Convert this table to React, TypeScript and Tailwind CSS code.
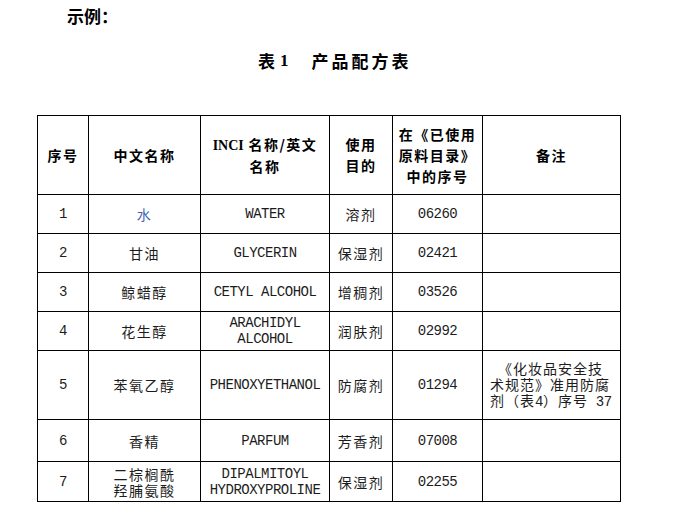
import React from 'react';

type Row = {
  no: string;
  cn: React.ReactNode;
  inci: React.ReactNode;
  use: string;
  code: string;
  note?: React.ReactNode;
  h: string;
  cnClass?: string;
};

const cjk = '[font-family:"Noto_Sans_CJK_SC",sans-serif]';
const mono = '[font-family:"Liberation_Mono",monospace] tracking-[-0.5px]';

const rows: Row[] = [
  { no: '1', cn: '水', inci: 'WATER', use: '溶剂', code: '06260', h: 'h-[39px]', cnClass: 'text-[#3f66b0]' },
  { no: '2', cn: '甘油', inci: 'GLYCERIN', use: '保湿剂', code: '02421', h: 'h-[39px]' },
  { no: '3', cn: '鲸蜡醇', inci: 'CETYL ALCOHOL', use: '增稠剂', code: '03526', h: 'h-[39px]' },
  {
    no: '4',
    cn: '花生醇',
    inci: (
      <>
        ARACHIDYL
        <br />
        ALCOHOL
      </>
    ),
    use: '润肤剂',
    code: '02992',
    h: 'h-[39px]',
  },
  {
    no: '5',
    cn: '苯氧乙醇',
    inci: 'PHENOXYETHANOL',
    use: '防腐剂',
    code: '01294',
    h: 'h-[69px]',
    note: (
      <>
        <span className="pl-[8px]">《化妆品安全技</span>
        <br />
        术规范》准用防腐
        <br />
        剂（表<span className={mono}>4</span>）序号<span className={mono}> 37</span>
      </>
    ),
  },
  { no: '6', cn: '香精', inci: 'PARFUM', use: '芳香剂', code: '07008', h: 'h-[42px]' },
  {
    no: '7',
    cn: (
      <>
        二棕榈酰
        <br />
        羟脯氨酸
      </>
    ),
    inci: (
      <>
        DIPALMITOYL
        <br />
        HYDROXYPROLINE
      </>
    ),
    use: '保湿剂',
    code: '02255',
    h: 'h-[40px]',
  },
];

export default function App() {
  const th = `border border-black text-center align-middle font-bold text-[14px] leading-[21px] text-black ${cjk} tracking-[1.5px] p-0`;
  const td = 'border border-black text-center align-middle p-0 text-[#1c1c1c]';
  const latin = '[font-family:"Liberation_Mono","Noto_Sans_CJK_SC",monospace] text-[14px] leading-4 tracking-[-0.5px]';
  const han = `${cjk} text-[14px] leading-4 tracking-[1.5px]`;

  return (
    <div className="min-h-[529px] w-[700px] bg-white">
      {/* Heading */}
      <div className={`pl-[67px] pt-[4px] text-[17px] font-bold leading-6 text-black ${cjk}`}>示例：</div>

      <div className="mt-[21px] flex pl-[258px] text-[17px] font-bold leading-6 text-black">
        <span className={cjk}>表</span>
        <span className='ml-[5px] [font-family:"Liberation_Serif",serif]'>1</span>
        <span className={`ml-[23px] tracking-[3px] ${cjk}`}>产品配方表</span>
      </div>

      {/* Formula table */}
      <table className="ml-[37px] mt-[42px] w-[583px] table-fixed border-collapse">
        <colgroup>
          <col className="w-[51px]" />
          <col className="w-[112px]" />
          <col className="w-[129px]" />
          <col className="w-[63px]" />
          <col className="w-[90px]" />
          <col className="w-[138px]" />
        </colgroup>
        <thead>
          <tr className="h-[79px]">
            <th className={th}>序号</th>
            <th className={th}>中文名称</th>
            <th className={th}>
              <span className='[font-family:"Liberation_Serif",serif] tracking-normal'>INCI</span> 名称/英文
              <br />
              名称
            </th>
            <th className={th}>
              使用
              <br />
              目的
            </th>
            <th className={th}>
              在《已使用
              <br />
              原料目录》
              <br />
              中的序号
            </th>
            <th className={th}>备注</th>
          </tr>
        </thead>
        <tbody>
          {rows.map((r) => (
            <tr key={r.no} className={r.h}>
              <td className={`${td} ${latin}`}>{r.no}</td>
              <td className={`${td} ${han} ${r.cnClass ?? ''}`}>{r.cn}</td>
              <td className={`${td} ${latin}`}>{r.inci}</td>
              <td className={`${td} ${han}`}>{r.use}</td>
              <td className={`${td} ${latin}`}>{r.code}</td>
              <td className={`${td} ${cjk} text-[14px] leading-4 tracking-[1px] whitespace-nowrap pl-[7px] text-left`}>{r.note}</td>
            </tr>
          ))}
        </tbody>
      </table>
    </div>
  );
}
